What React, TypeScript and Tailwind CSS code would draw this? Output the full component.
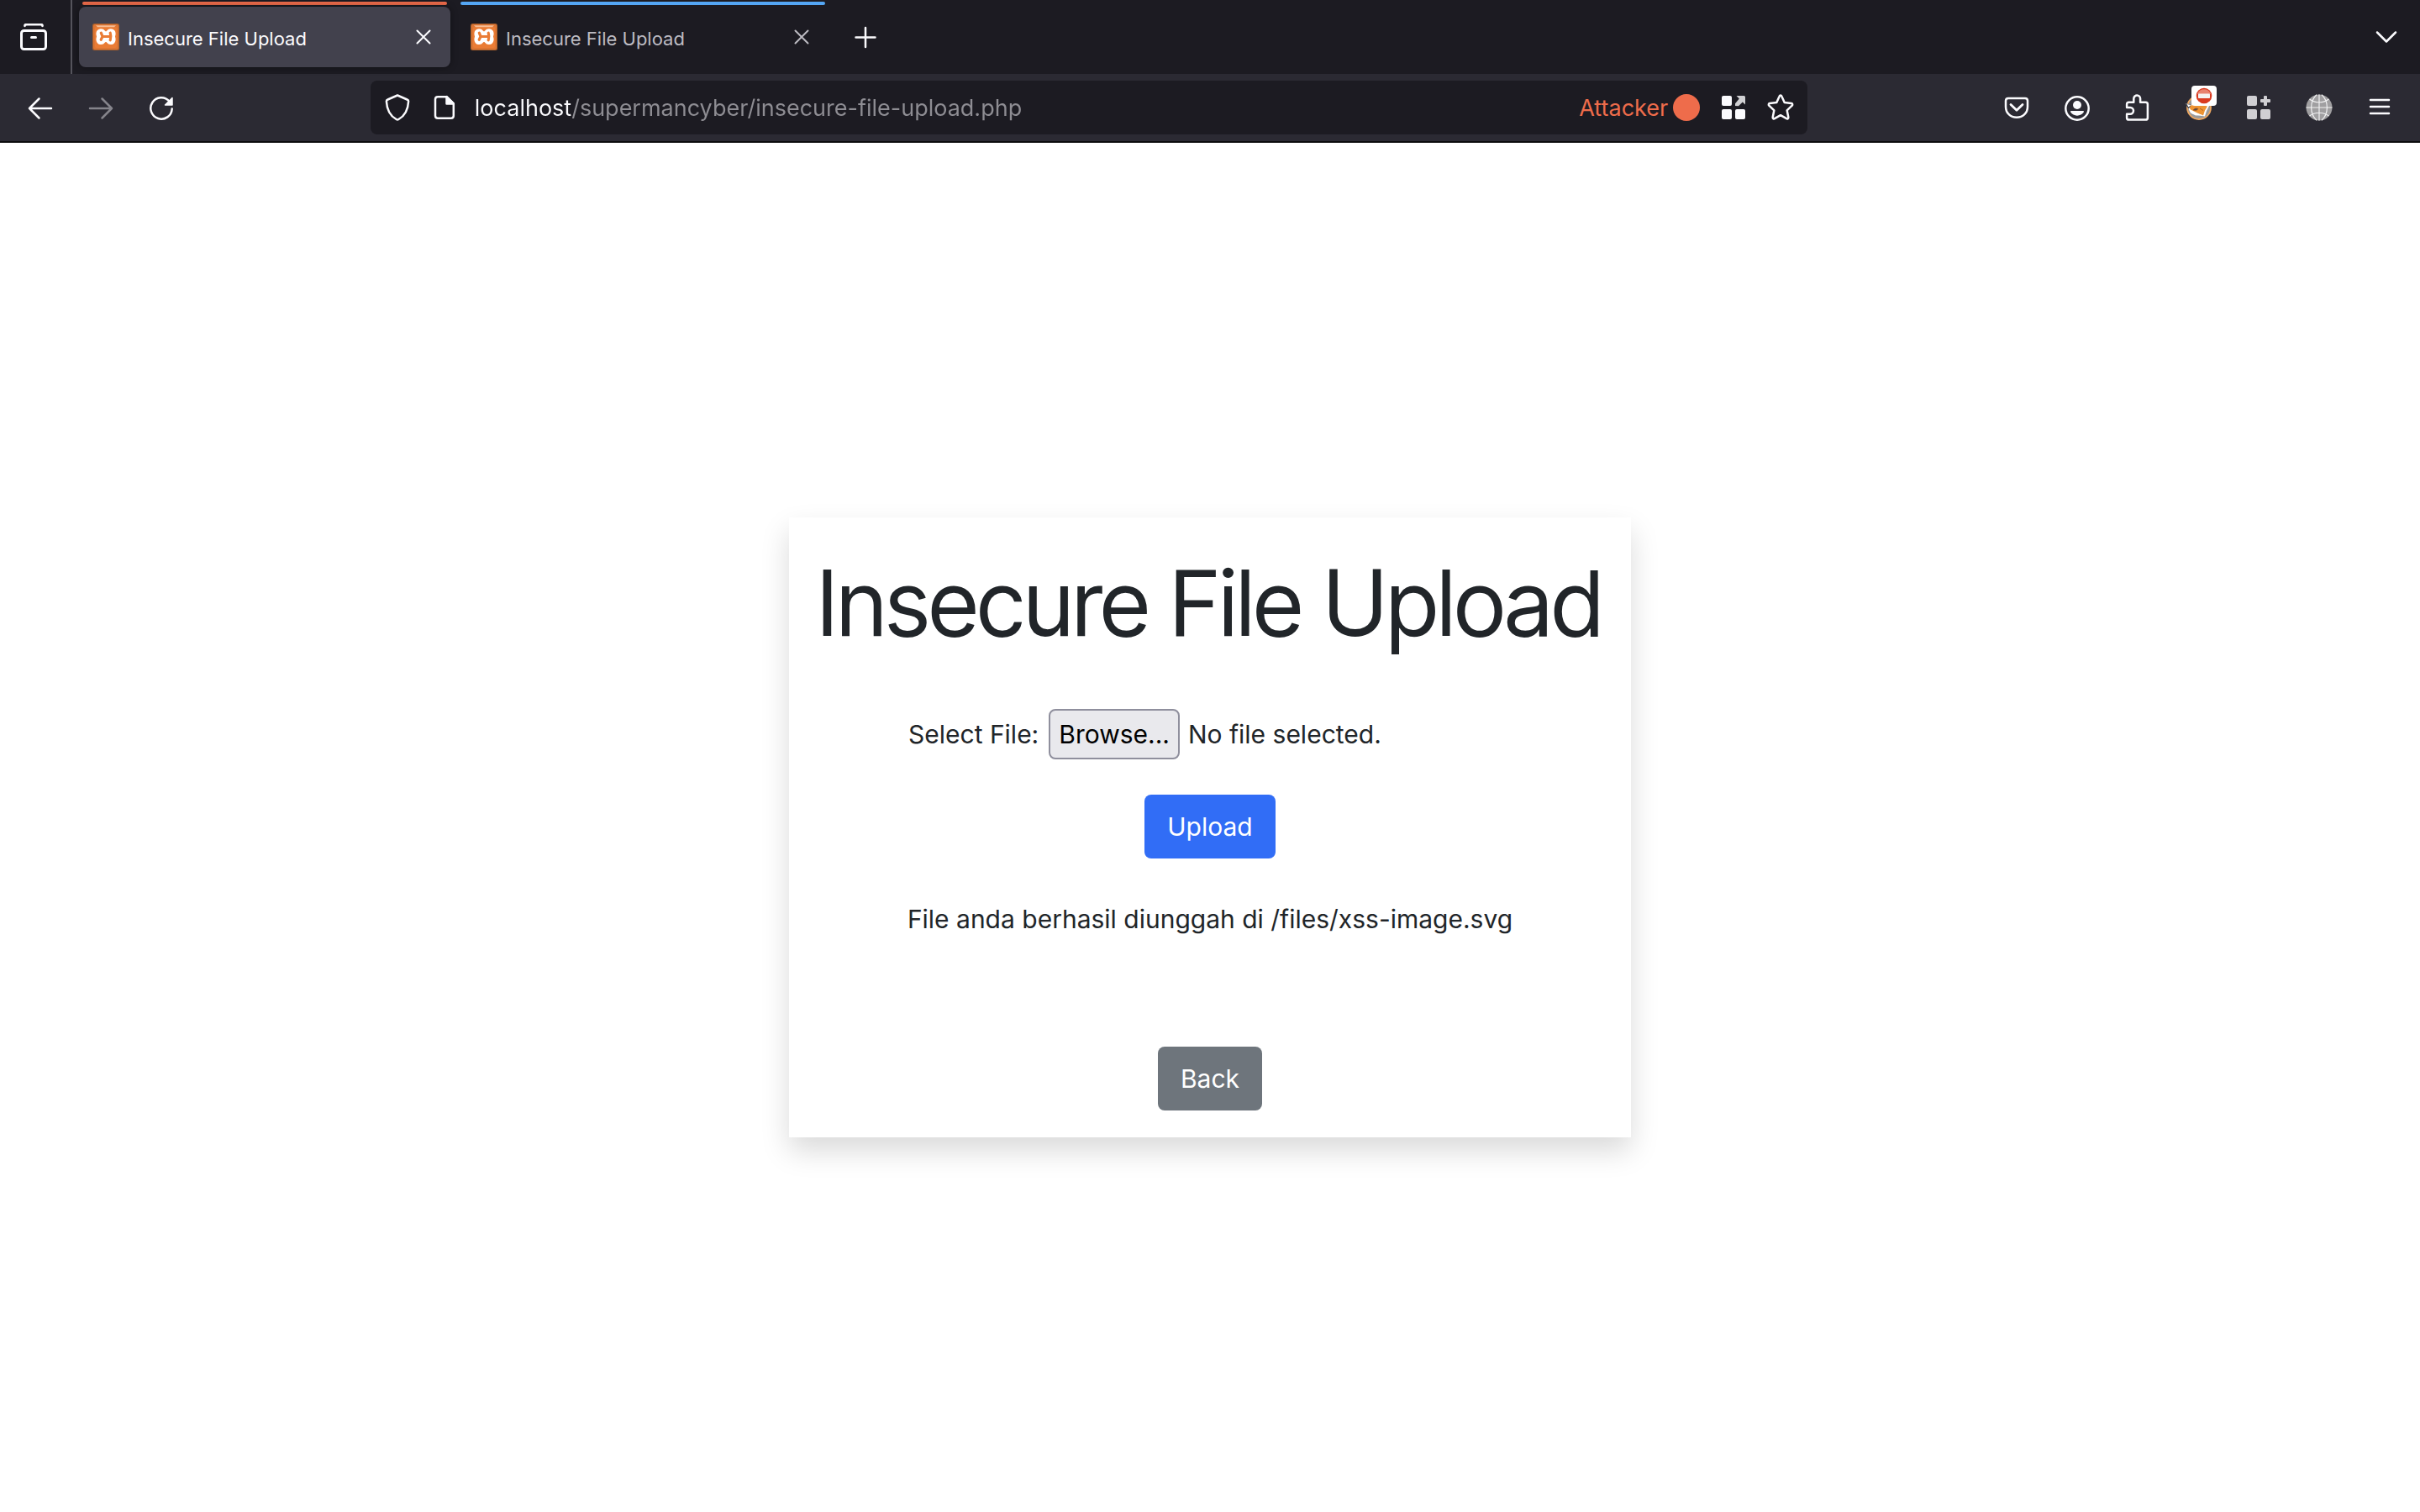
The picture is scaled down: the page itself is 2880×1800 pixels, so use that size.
import React, { useRef, useState } from "react";

type IconProps = { children: React.ReactNode; className?: string };

function Icon({ children, className = "" }: IconProps) {
  return (
    <svg
      viewBox="0 0 32 32"
      className={`size-8 shrink-0 ${className}`}
      fill="none"
      stroke="currentColor"
      strokeWidth="2.5"
      strokeLinecap="round"
      strokeLinejoin="round"
      aria-hidden="true"
    >
      {children}
    </svg>
  );
}

function XamppIcon() {
  return (
    <svg viewBox="0 0 32 32" className="size-8 shrink-0" aria-hidden="true">
      <rect width="32" height="32" rx="2.5" fill="#a85f2c" />
      <rect x="1" y="1" width="30" height="30" rx="2" fill="#dc7533" />
      <rect x="3" y="4" width="26" height="25" rx="2" fill="#ea7c35" />
      <path d="M4 2.2h24l-2 2H6z" fill="#f6bd94" />
      <path
        d="M10 8.3c1.7 0 2.9.8 3.5 2.2h5c.6-1.4 1.8-2.2 3.5-2.2 2.3 0 3.6 1.6 3.6 3.7 0 1.5-.6 2.3-.6 3.5s.6 2 .6 3.5c0 2.3-1.3 4-3.6 4-1.7 0-2.9-.9-3.5-2.3h-5c-.6 1.4-1.8 2.3-3.5 2.3-2.3 0-3.6-1.7-3.6-4 0-1.5.6-2.3.6-3.5s-.6-2-.6-3.5c0-2.1 1.3-3.7 3.6-3.7z"
        fill="#fff"
        stroke="#fff"
        strokeWidth="4"
        strokeLinejoin="round"
      />
      <path d="M14.8 5.5h2.4L16 9.2zM14.8 26h2.4L16 22z" fill="#ea7c35" stroke="#ea7c35" strokeWidth="1" />
      <path
        d="M10.3 11.2l1.7 4.3-1.8 3.8M12 15.5h9.5M21.2 11.2c.9 2.8.9 5.7 0 8.6"
        fill="none"
        stroke="#ea7c35"
        strokeWidth="3.2"
        strokeLinecap="round"
      />
    </svg>
  );
}

function FoxIcon() {
  return (
    <svg viewBox="0 0 32 32" className="size-8 shrink-0" aria-hidden="true">
      <circle cx="17" cy="16" r="14" fill="#9b9b9b" stroke="#f0a860" strokeWidth="1.8" />
      <path d="M1 11l6 1.5L17 10l12 4-3 6-2 6.5-10-1.5-7-2.5z" fill="#fff" />
      <path d="M3 12l5 1.5 8-1.5 11 2.5-3 5-2 6-7-3-8-4z" fill="#ee9433" />
      <path d="M0 11l8 1.5-3.5 5z" fill="#3f3f46" />
      <path d="M2.5 12l5 1-3 2.5z" fill="#fff" />
      <path d="M10 19c2-2.5 4-2.5 6-1.5-1 2-3.5 2.5-6 1.5zM18 17l4 2.5" fill="#4b4b55" stroke="#a8571a" strokeWidth=".8" />
      <path d="M6 19l6 3.5 9 2.5-8 .5-5-2.5z" fill="#fff" />
    </svg>
  );
}

function NoEntryBadge() {
  return (
    <span className="absolute -top-2.5 left-2 flex h-6 w-[30px] items-center justify-center rounded-sm bg-white">
      <svg viewBox="0 0 20 20" className="size-5 shrink-0" aria-hidden="true">
        <circle cx="10" cy="10" r="9.3" fill="#d93a20" />
        <path d="M2 8a8.5 8.5 0 0 1 16 0z" fill="#e8826f" />
        <rect x="3" y="7.5" width="14" height="5.5" rx=".8" fill="#f5f1f0" />
      </svg>
    </span>
  );
}

function GlobeIcon() {
  return (
    <svg viewBox="0 0 32 32" className="size-8 shrink-0" aria-hidden="true">
      <circle cx="16" cy="16" r="15.5" fill="#a09fa1" />
      <g fill="none" stroke="#f1f1f2" strokeWidth="1.2">
        <path d="M16 .5v31M.5 16h31M4.5 6c6.5 5 16.5 5 23 0M4.5 26c6.5-5 16.5-5 23 0" />
        <path d="M13 .8C4.5 8.5 4.5 23.5 13 31.2M19 .8c8.5 7.7 8.5 22.7 0 30.4" />
      </g>
    </svg>
  );
}

function ToolButton({ label, children, className = "w-18" }: { label: string; children: React.ReactNode; className?: string }) {
  return (
    <button type="button" aria-label={label} className={`flex h-16 shrink-0 items-center justify-center rounded-lg ${className}`}>
      {children}
    </button>
  );
}

function Tab({ title, selected, line }: { title: string; selected?: boolean; line: string }) {
  return (
    <div className="flex w-[442px] flex-col gap-0.5 pt-0.5 pb-2">
      <div className={`mx-1 h-1 rounded-full ${line}`} />
      <div
        className={`flex flex-1 items-center rounded-lg pr-2 pl-4 ${
          selected ? "bg-[#42414d] text-[#fbfbfe] shadow-[0_0_8px_rgba(0,0,0,0.4)]" : "text-[#bcbbc2]"
        }`}
      >
        <button type="button" role="tab" aria-selected={!!selected} className="flex flex-1 items-center gap-2.5 text-left">
          <XamppIcon />
          <span className="pt-1 text-[22px] leading-7">{title}</span>
        </button>
        <button type="button" aria-label={`Close ${title}`} className="flex size-12 items-center justify-center">
          <Icon>
            <path d="M8.5 8.5l15 15M23.5 8.5l-15 15" strokeWidth="2" />
          </Icon>
        </button>
      </div>
    </div>
  );
}

function TabStrip() {
  return (
    <div className="flex h-22 items-stretch bg-[#1c1b22] text-[#fbfbfe]">
      <div className="mr-2 flex w-[86px] items-center border-r-2 border-[#55545c]">
        <ToolButton label="View recent browsing" className="w-20">
          <Icon>
            <path d="M5.5 2.8C5.5 1.5 6.5 1 8 1h16c1.5 0 2.5.5 2.5 1.8" strokeWidth="2.8" />
            <rect x="1.5" y="8.5" width="29" height="22" rx="3" strokeWidth="3" />
            <path d="M13.5 16.5h5" strokeWidth="3" />
          </Icon>
        </ToolButton>
      </div>
      <div role="tablist" aria-label="Tabs" className="flex gap-2">
        <Tab title="Insecure File Upload" selected line="bg-[#ee6c4b]" />
        <Tab title="Insecure File Upload" line="bg-[#54a6f4]" />
      </div>
      <div className="flex flex-1 items-center justify-between pr-1 pl-2">
        <ToolButton label="Open a new tab">
          <Icon>
            <path d="M16 5v23M4.5 16.5h23" />
          </Icon>
        </ToolButton>
        <ToolButton label="List all tabs">
          <Icon>
            <path d="M5 10.5l11 11 11-11" />
          </Icon>
        </ToolButton>
      </div>
    </div>
  );
}

function UrlBar() {
  const [url, setUrl] = useState("localhost/supermancyber/insecure-file-upload.php");
  return (
    <div className="flex h-16 flex-8 items-center rounded-lg bg-[#1c1b22] px-1">
      <ToolButton label="Tracking protection" className="w-14">
        <Icon>
          <path d="M16 1.5l11.5 5c1 .4 1.7 1.2 1.6 2.2-.5 9.8-4.6 17.3-11.7 21.3-.9.5-1.9.5-2.8 0C7.5 26 3.4 18.5 2.9 8.7c-.1-1 .6-1.8 1.6-2.2z" />
        </Icon>
      </ToolButton>
      <ToolButton label="Site information" className="w-14">
        <Icon>
          <path d="M8 3.2h10.5l8.3 8.3v14.3c0 1.9-1.1 3-3 3H8c-1.9 0-3-1.1-3-3V6.2c0-1.9 1.1-3 3-3z" />
          <path d="M18.5 3.2v8.3h8.3z" fill="currentColor" />
        </Icon>
      </ToolButton>
      <input
        aria-label="Address"
        value={url}
        onChange={(e) => setUrl(e.target.value)}
        className="min-w-0 flex-1 bg-[linear-gradient(to_right,#fbfbfe_123px,#8e8d93_123px)] bg-clip-text pt-0.5 pl-2 text-[27px] leading-10 text-transparent outline-none"
      />
      <span className="pt-0.5 text-[27px] leading-10 text-[#ee6c4b]">Attacker</span>
      <span className="mr-3 ml-1.5 size-8 rounded-full bg-[#ee6c4b]" />
      <ToolButton label="Add search engine" className="w-14">
        <Icon>
          <g fill="currentColor" stroke="none">
            <rect x="2" y="2" width="12" height="12" rx="2" />
            <rect x="2" y="18" width="12" height="12" rx="2" />
            <rect x="18" y="18" width="12" height="12" rx="2" />
          </g>
          <path d="M19.5 2H28.5A1.5 1.5 0 0 1 30 3.5V12.5L26.8 9.6 22 14.2 18 14V11.2L22.8 5.6z" fill="#cfcfd2" stroke="none" />
        </Icon>
      </ToolButton>
      <ToolButton label="Bookmark this page" className="w-14">
        <Icon>
          <path d="M14.7 2.5c.5-1.2 2.1-1.2 2.6 0l3.4 7.6 8.2 1c1.3.2 1.8 1.7.8 2.6l-6 5.7 1.6 8.2c.2 1.3-1.1 2.2-2.2 1.6L16 25.2l-7.1 4c-1.1.6-2.4-.3-2.2-1.6l1.6-8.2-6-5.7c-1-.9-.5-2.4.8-2.6l8.2-1z" />
        </Icon>
      </ToolButton>
    </div>
  );
}

function NavToolbar() {
  return (
    <div className="flex h-[82px] items-center border-b-2 border-[#0c0c0d] bg-[#2b2a33] px-3 text-[#fbfbfe]">
      <ToolButton label="Back">
        <Icon>
          <path d="M29 17H3M14.5 5.5L3 17l11.5 11.5" />
        </Icon>
      </ToolButton>
      <ToolButton label="Forward">
        <Icon className="text-[#85848b]">
          <path d="M3 17h26M17.5 5.5L29 17 17.5 28.5" />
        </Icon>
      </ToolButton>
      <ToolButton label="Reload">
        <Icon>
          <path d="M25.5 8.5A12.7 12.7 0 1 0 28.7 17.5" />
          <path d="M29 4.5v8.5h-8.5z" fill="currentColor" strokeWidth="1.5" />
        </Icon>
      </ToolButton>
      <div className="flex-1" />
      <UrlBar />
      <div className="flex-1" />
      <ToolButton label="Save to Pocket">
        <Icon>
          <path d="M6 5h20c2 0 3 1 3 3v7c0 7.5-5.5 12.8-13 12.8S3 22.5 3 15V8c0-2 1-3 3-3z" />
          <path d="M9 12.5l7 6.8 7-6.8" strokeWidth="2.8" />
        </Icon>
      </ToolButton>
      <ToolButton label="Account">
        <Icon>
          <circle cx="16" cy="17" r="13.7" />
          <circle cx="16" cy="13" r="5" fill="currentColor" stroke="none" />
          <path d="M9 20h14c1 0 1.3.8.8 1.5-3.3 5.5-12.3 5.5-15.6 0-.5-.7-.2-1.5.8-1.5z" fill="currentColor" stroke="none" />
        </Icon>
      </ToolButton>
      <ToolButton label="Extensions">
        <Icon>
          <path d="M5.5 9.8h5.8V5.5a3.9 3.9 0 0 1 7.8 0v4.3h6.4c1.6 0 2.4.8 2.4 2.4v16c0 1.6-.8 2.4-2.4 2.4h-20c-1.6 0-2.4-.8-2.4-2.4v-4.5h4a3.9 3.9 0 0 0 0-7.8h-4v-3.7c0-1.6.8-2.4 2.4-2.4z" />
        </Icon>
      </ToolButton>
      <ToolButton label="FoxyProxy">
        <span className="relative">
          <FoxIcon />
          <NoEntryBadge />
        </span>
      </ToolButton>
      <ToolButton label="Add-ons">
        <Icon className="text-[#d0cfd3]">
          <g fill="currentColor" stroke="none">
            <rect x="2" y="2" width="12" height="12" rx="2" />
            <rect x="2" y="18" width="12" height="12" rx="2" />
            <rect x="18" y="18" width="12" height="12" rx="2" />
            <path d="M22 3a1 1 0 0 1 1-1h2a1 1 0 0 1 1 1v3h3a1 1 0 0 1 1 1v2a1 1 0 0 1-1 1h-3v3a1 1 0 0 1-1 1h-2a1 1 0 0 1-1-1v-3h-3a1 1 0 0 1-1-1V7a1 1 0 0 1 1-1h3z" />
          </g>
        </Icon>
      </ToolButton>
      <ToolButton label="Proxy globe">
        <GlobeIcon />
      </ToolButton>
      <ToolButton label="Open application menu">
        <Icon>
          <path d="M5 7h22M5 15h22M5 23h22" />
        </Icon>
      </ToolButton>
    </div>
  );
}

function UploadCard() {
  const fileRef = useRef<HTMLInputElement>(null);
  const [name, setName] = useState("No file selected.");
  return (
    <section className="flex w-full max-w-[1002px] flex-col items-center bg-white p-8 shadow-[0_16px_32px_rgba(0,0,0,0.15)]">
      <h1 className="text-center font-['Inter_Tight','Inter',sans-serif] text-[108px] leading-[140px] font-normal">Insecure File Upload</h1>
      <form className="mt-14 flex w-full flex-col items-center gap-[42px] px-[110px]" onSubmit={(e) => e.preventDefault()}>
        <div className="flex w-full items-center">
          <label htmlFor="file">Select File:</label>
          <input
            id="file"
            ref={fileRef}
            type="file"
            className="sr-only"
            onChange={(e) => setName(e.target.files?.[0]?.name ?? "No file selected.")}
          />
          <button
            type="button"
            onClick={() => fileRef.current?.click()}
            className="mr-2.5 ml-3 h-15 rounded-lg border-2 border-[#8f8f9d] bg-[#e9e9ed] px-2.5 text-black"
          >
            Browse...
          </button>
          <span>{name}</span>
        </div>
        <button type="submit" className="rounded-lg bg-[#316df6] px-[27px] py-3.5 text-white">
          Upload
        </button>
      </form>
      <p className="mt-12 text-center">File anda berhasil diunggah di /files/xss-image.svg</p>
      <a href="#back" className="mt-32 rounded-lg bg-[#6e757c] px-[27px] py-3.5 text-white">
        Back
      </a>
    </section>
  );
}

export default function App() {
  return (
    <div className="flex min-h-screen flex-col bg-white font-['Inter',sans-serif]">
      <header>
        <TabStrip />
        <NavToolbar />
      </header>
      <main className="flex flex-1 items-center justify-center text-[30px] leading-12 text-[#212529]">
        <UploadCard />
      </main>
    </div>
  );
}
